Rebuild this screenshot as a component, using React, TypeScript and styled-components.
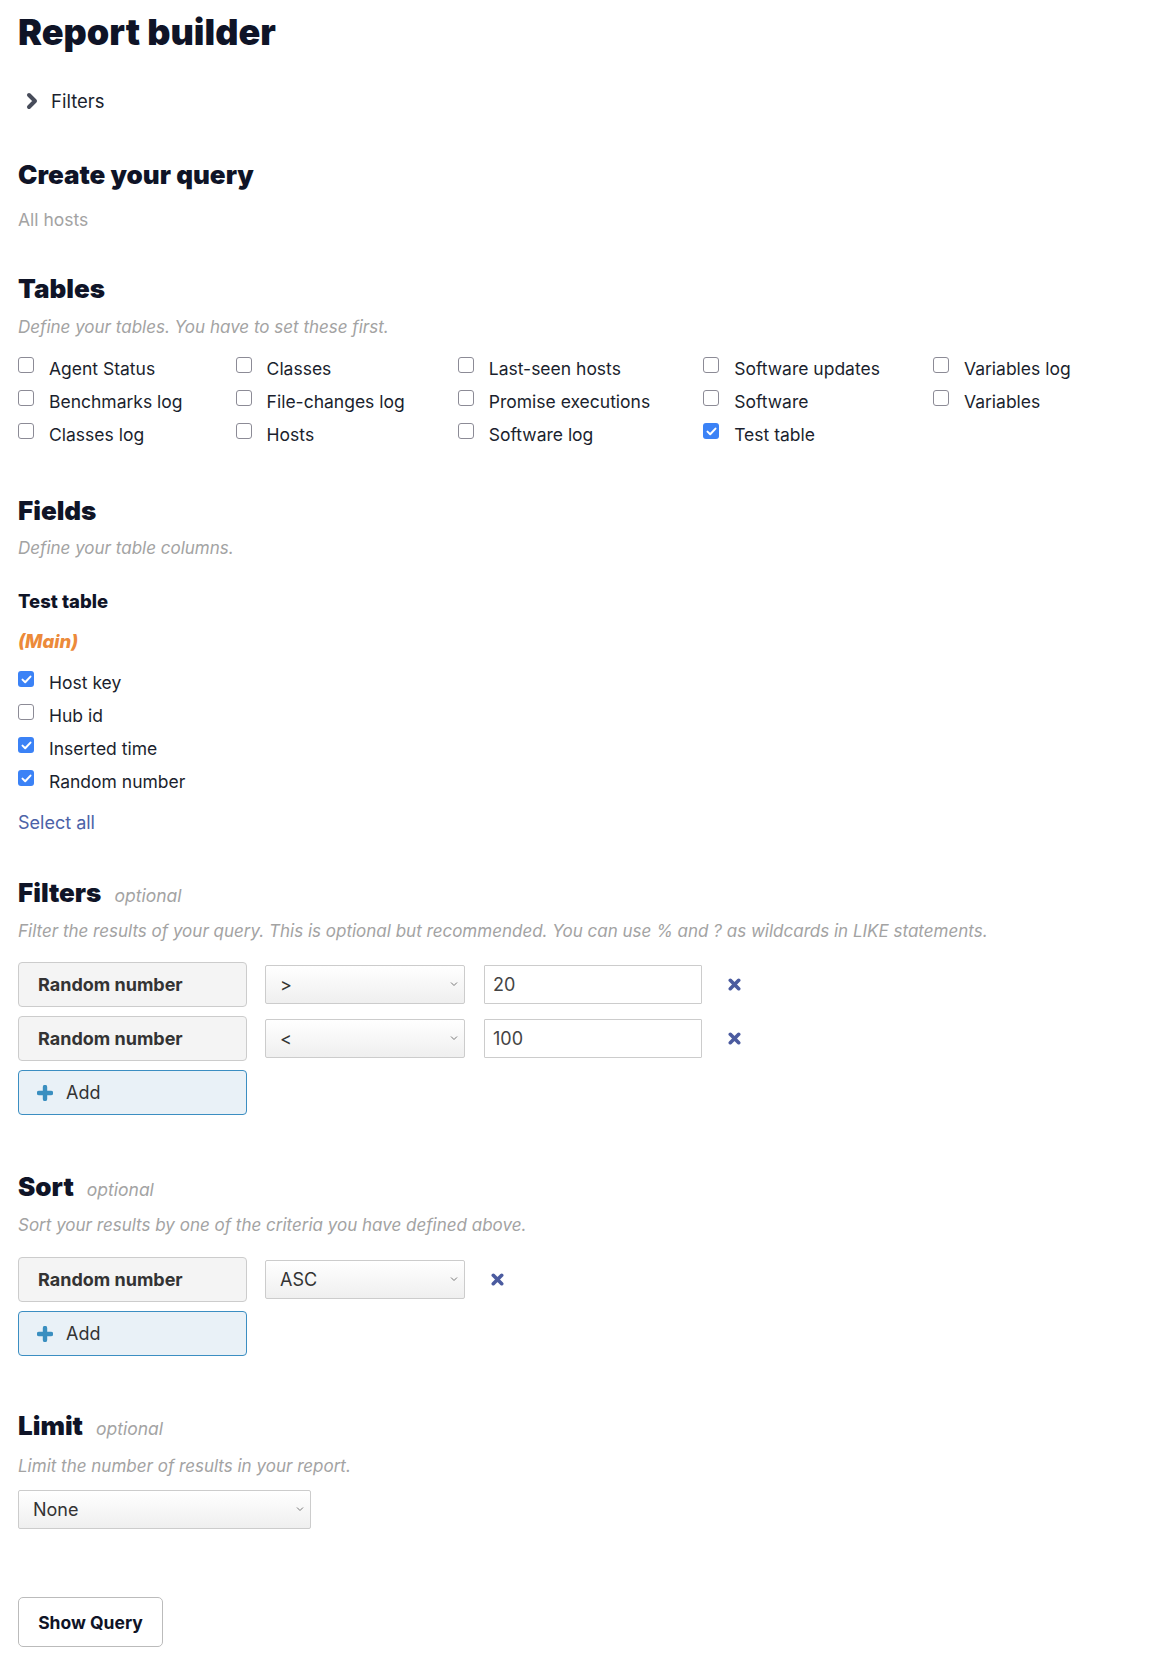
import React from "react";
import styled, { createGlobalStyle } from "styled-components";

const GlobalStyle = createGlobalStyle`
  html, body { margin: 0; padding: 0; background: #ffffff; }
  body { font-family: Inter, "Noto Sans", sans-serif; color: #1b1f2e; }
  * { box-sizing: border-box; }
`;

const Page = styled.div`
  padding: 12px 18px 20px 18px;
  display: flex;
  flex-direction: column;
  align-items: flex-start;
`;

const Title = styled.h1`
  margin: 0;
  font-size: 36px;
  line-height: 40px;
  font-weight: 900;
  color: #0f1427;
  letter-spacing: 0;
`;

const Toggle = styled.div`
  margin-top: 37px;
  display: flex;
  align-items: center;
  gap: 12px;
  padding-left: 7px;
  font-size: 18.5px;
  line-height: 24px;
  color: #1b1f2e;
`;

const Section = styled.section<{ $top: number }>`
  margin-top: ${(p) => p.$top}px;
  display: flex;
  flex-direction: column;
  align-items: flex-start;
`;

const HeadingRow = styled.div`
  display: flex;
  align-items: baseline;
  gap: 13px;
`;

const Heading = styled.h2`
  margin: 0;
  font-size: 26px;
  line-height: 32px;
  font-weight: 900;
  color: #0f1427;
`;

const Optional = styled.span`
  font-size: 17.5px;
  font-style: italic;
  color: #a3a3a3;
`;

const Muted = styled.div<{ $gap?: number }>`
  margin-top: ${(p) => p.$gap ?? 10}px;
  font-size: 17.5px;
  line-height: 24px;
  color: #a3a3a3;
`;

const Subtitle = styled.div<{ $gap?: number }>`
  margin-top: ${(p) => p.$gap ?? 10}px;
  font-size: 17px;
  line-height: 24px;
  font-style: italic;
  color: #a3a3a3;
`;

const TableGrid = styled.div`
  margin-top: 13px;
  display: grid;
  grid-template-rows: repeat(3, 33px);
  grid-auto-flow: column;
  grid-auto-columns: max-content;
  column-gap: 53px;
`;

const CheckRow = styled.label`
  display: flex;
  align-items: flex-start;
  gap: 15px;
  height: 33px;
  font-size: 17.5px;
  line-height: 33px;
  color: #1b1f2e;
`;

const Box = styled.span<{ $checked: boolean }>`
  margin-top: 5px;
  width: 16px;
  height: 16px;
  flex: none;
  border-radius: 3px;
  display: flex;
  align-items: center;
  justify-content: center;
  background: ${(p) => (p.$checked ? "#3b82f6" : "#ffffff")};
  border: ${(p) => (p.$checked ? "none" : "1.5px solid #8c8b96")};
`;

const TableName = styled.div`
  margin-top: 29px;
  font-size: 18.5px;
  line-height: 24px;
  font-weight: 800;
  color: #0f1427;
`;

const MainTag = styled.div`
  margin-top: 16px;
  font-size: 18.5px;
  line-height: 24px;
  font-weight: 800;
  font-style: italic;
  color: #ec8a3a;
`;

const FieldList = styled.div`
  margin-top: 13px;
  display: flex;
  flex-direction: column;
`;

const SelectAll = styled.a`
  margin-top: 13px;
  font-size: 18px;
  line-height: 24px;
  color: #4c63a8;
  text-decoration: none;
  cursor: pointer;
`;

const Rows = styled.div<{ $gap: number }>`
  margin-top: ${(p) => p.$gap}px;
  display: flex;
  flex-direction: column;
  gap: 9px;
`;

const Row = styled.div`
  display: flex;
  align-items: center;
`;

const FieldBox = styled.div`
  width: 229px;
  height: 45px;
  display: flex;
  align-items: center;
  padding-left: 19px;
  background: #f4f4f4;
  border: 1px solid #cccccc;
  border-radius: 4px;
  font-size: 18px;
  font-weight: 700;
  color: #333333;
`;

const SelectWrap = styled.div<{ $width: number; $ml: number }>`
  position: relative;
  margin-left: ${(p) => p.$ml}px;
  width: ${(p) => p.$width}px;
  height: 39px;
`;

const Select = styled.select`
  appearance: none;
  -webkit-appearance: none;
  width: 100%;
  height: 100%;
  padding: 0 0 0 14px;
  border: 1px solid #cccccc;
  border-radius: 2px;
  background: linear-gradient(#ffffff, #efefef);
  font-family: Inter, "Noto Sans", sans-serif;
  font-size: 18px;
  color: #333333;
  outline: none;
`;

const Caret = styled.svg`
  position: absolute;
  right: 7px;
  top: 16px;
  width: 8px;
  height: 6px;
  pointer-events: none;
`;

const Input = styled.input`
  margin-left: 19px;
  width: 218px;
  height: 39px;
  padding: 0 8px;
  border: 1px solid #cccccc;
  border-radius: 1px;
  font-family: Inter, "Noto Sans", sans-serif;
  font-size: 18px;
  color: #444444;
  outline: none;
`;

const Remove = styled.button`
  margin-left: 26px;
  padding: 0;
  border: none;
  background: none;
  display: flex;
  align-items: center;
  cursor: pointer;
`;

const AddButton = styled.button`
  width: 229px;
  height: 45px;
  display: flex;
  align-items: center;
  gap: 13px;
  padding: 0 0 0 18px;
  background: #e9f1f7;
  border: 1px solid #3b8ec2;
  border-radius: 4px;
  font-family: Inter, "Noto Sans", sans-serif;
  font-size: 18px;
  color: #333333;
  cursor: pointer;
`;

const ShowQuery = styled.button`
  margin-top: 68px;
  width: 145px;
  height: 50px;
  background: #ffffff;
  border: 1px solid #bbbbbb;
  border-radius: 5px;
  font-family: Inter, "Noto Sans", sans-serif;
  font-size: 17.5px;
  font-weight: 700;
  color: #0f1427;
  cursor: pointer;
`;

const XIcon = () => (
  <svg width="13" height="13" viewBox="0 0 13 13">
    <path d="M2.3 2.3 L10.7 10.7 M10.7 2.3 L2.3 10.7" stroke="#4b5b9f" strokeWidth="3.6" strokeLinecap="round" />
  </svg>
);

const PlusIcon = () => (
  <svg width="16" height="16" viewBox="0 0 16 16">
    <path d="M8 2 L8 14 M2 8 L14 8" stroke="#3a8fc0" strokeWidth="4.4" strokeLinecap="round" />
  </svg>
);

const Check = ({ checked, label }: { checked: boolean; label: string }) => (
  <CheckRow>
    <Box $checked={checked}>
      {checked && (
        <svg width="11" height="9" viewBox="0 0 11 9">
          <path d="M1.5 4.6 L4.2 7.2 L9.5 1.6" fill="none" stroke="#fff" strokeWidth="2" strokeLinecap="round" strokeLinejoin="round" />
        </svg>
      )}
    </Box>
    {label}
  </CheckRow>
);

const Dropdown = ({ value, width, ml }: { value: string; width: number; ml: number }) => (
  <SelectWrap $width={width} $ml={ml}>
    <Select defaultValue={value}>
      <option>{value}</option>
    </Select>
    <Caret viewBox="0 0 8 6">
      <path d="M1 1.5 L4 4.5 L7 1.5" fill="none" stroke="#777" strokeWidth="1" />
    </Caret>
  </SelectWrap>
);

const tables: [string, boolean][] = [
  ["Agent Status", false],
  ["Benchmarks log", false],
  ["Classes log", false],
  ["Classes", false],
  ["File-changes log", false],
  ["Hosts", false],
  ["Last-seen hosts", false],
  ["Promise executions", false],
  ["Software log", false],
  ["Software updates", false],
  ["Software", false],
  ["Test table", true],
  ["Variables log", false],
  ["Variables", false],
];

const fields: [string, boolean][] = [
  ["Host key", true],
  ["Hub id", false],
  ["Inserted time", true],
  ["Random number", true],
];

export default function App() {
  return (
    <>
      <GlobalStyle />
      <Page>
        <Title>Report builder</Title>
        <Toggle>
          <svg width="14" height="18" viewBox="0 0 14 18">
            <path d="M4 3 L10 9 L4 15" fill="none" stroke="#474c5a" strokeWidth="4" strokeLinecap="round" strokeLinejoin="round" />
          </svg>
          Filters
        </Toggle>

        <Section $top={46}>
          <Heading>Create your query</Heading>
          <Muted $gap={17}>All hosts</Muted>
        </Section>

        <Section $top={41}>
          <Heading>Tables</Heading>
          <Subtitle>Define your tables. You have to set these first.</Subtitle>
          <TableGrid>
            {tables.map(([name, checked]) => (
              <Check key={name} checked={checked} label={name} />
            ))}
          </TableGrid>
        </Section>

        <Section $top={44}>
          <Heading>Fields</Heading>
          <Subtitle $gap={9}>Define your table columns.</Subtitle>
          <TableName>Test table</TableName>
          <MainTag>(Main)</MainTag>
          <FieldList>
            {fields.map(([name, checked]) => (
              <Check key={name} checked={checked} label={name} />
            ))}
          </FieldList>
          <SelectAll>Select all</SelectAll>
        </Section>

        <Section $top={42}>
          <HeadingRow>
            <Heading>Filters</Heading>
            <Optional>optional</Optional>
          </HeadingRow>
          <Subtitle>Filter the results of your query. This is optional but recommended. You can use % and ? as wildcards in LIKE statements.</Subtitle>
          <Rows $gap={19}>
            <Row>
              <FieldBox>Random number</FieldBox>
              <Dropdown value=">" width={200} ml={18} />
              <Input defaultValue="20" />
              <Remove><XIcon /></Remove>
            </Row>
            <Row>
              <FieldBox>Random number</FieldBox>
              <Dropdown value="<" width={200} ml={18} />
              <Input defaultValue="100" />
              <Remove><XIcon /></Remove>
            </Row>
            <AddButton><PlusIcon />Add</AddButton>
          </Rows>
        </Section>

        <Section $top={56}>
          <HeadingRow>
            <Heading>Sort</Heading>
            <Optional>optional</Optional>
          </HeadingRow>
          <Subtitle>Sort your results by one of the criteria you have defined above.</Subtitle>
          <Rows $gap={20}>
            <Row>
              <FieldBox>Random number</FieldBox>
              <Dropdown value="ASC" width={200} ml={18} />
              <Remove><XIcon /></Remove>
            </Row>
            <AddButton><PlusIcon />Add</AddButton>
          </Rows>
        </Section>

        <Section $top={54}>
          <HeadingRow>
            <Heading>Limit</Heading>
            <Optional>optional</Optional>
          </HeadingRow>
          <Subtitle $gap={12}>Limit the number of results in your report.</Subtitle>
          <Rows $gap={12}>
            <Dropdown value="None" width={293} ml={0} />
          </Rows>
        </Section>

        <ShowQuery>Show Query</ShowQuery>
      </Page>
    </>
  );
}
